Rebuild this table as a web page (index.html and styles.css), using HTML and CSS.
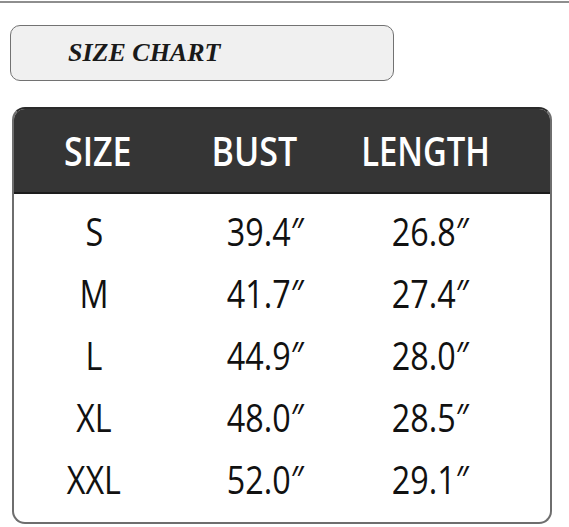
FILE: index.html
```html
<!DOCTYPE html>
<html>
<head>
<meta charset="utf-8">
<link rel="stylesheet" href="styles.css">
</head>
<body>
<div class="topline"></div>
<div class="title-box"><span class="title">SIZE CHART</span></div>
<div class="chart">
  <div class="head">
    <div class="hc"><span class="t">SIZE</span></div>
    <div class="hc"><span class="t">BUST</span></div>
    <div class="hc"><span class="t narrow">LENGTH</span></div>
  </div>
  <div class="rows">
    <div class="c"><span class="t">S</span></div><div class="c"><span class="t">39.4″</span></div><div class="c"><span class="t">26.8″</span></div>
    <div class="c"><span class="t">M</span></div><div class="c"><span class="t">41.7″</span></div><div class="c"><span class="t">27.4″</span></div>
    <div class="c"><span class="t">L</span></div><div class="c"><span class="t">44.9″</span></div><div class="c"><span class="t">28.0″</span></div>
    <div class="c"><span class="t">XL</span></div><div class="c"><span class="t">48.0″</span></div><div class="c"><span class="t">28.5″</span></div>
    <div class="c"><span class="t">XXL</span></div><div class="c"><span class="t">52.0″</span></div><div class="c"><span class="t">29.1″</span></div>
  </div>
</div>
</body>
</html>
```
FILE: styles.css
```css
html, body {
  margin: 0;
  padding: 0;
  background: #fff;
}
body {
  width: 569px;
  height: 527px;
  overflow: hidden;
}
.topline {
  margin-top: 1px;
  height: 2px;
  background: #8e8e8e;
}
.title-box {
  margin: 22px 0 0 10px;
  height: 54px;
  width: 325px;
  padding-left: 57px;
  border: 1px solid #727272;
  border-radius: 10px;
  background: #f0f0f0;
}
.title {
  font-family: "Liberation Serif", serif;
  font-weight: bold;
  font-style: italic;
  font-size: 26px;
  line-height: 54px;
  color: #1a1a1a;
}
.chart {
  margin: 26px 0 0 12px;
  width: 536px;
  border: 2px solid #6e6e6e;
  border-top-color: #2a2a2a;
  border-radius: 13px;
  overflow: hidden;
  background: #fff;
}
.head {
  display: grid;
  grid-template-columns: 168px 144px 200px;
  height: 83px;
  background: #353535;
  border-bottom: 2px solid #1c1c1c;
  font-family: "Open Sans", sans-serif;
  font-weight: 600;
  font-size: 40px;
  line-height: 83px;
  color: #fff;
}
.hc, .c {
  text-align: center;
  white-space: nowrap;
}
.t {
  display: inline-block;
  transform: scaleX(0.85);
}
.t.narrow {
  transform: scaleX(0.82);
}
.rows {
  display: grid;
  grid-template-columns: 160px 182px 148px;
  grid-auto-rows: 62px;
  padding: 6px 0 12px;
  font-family: "Open Sans", sans-serif;
  font-size: 38px;
  line-height: 62px;
  color: #111;
}
```
